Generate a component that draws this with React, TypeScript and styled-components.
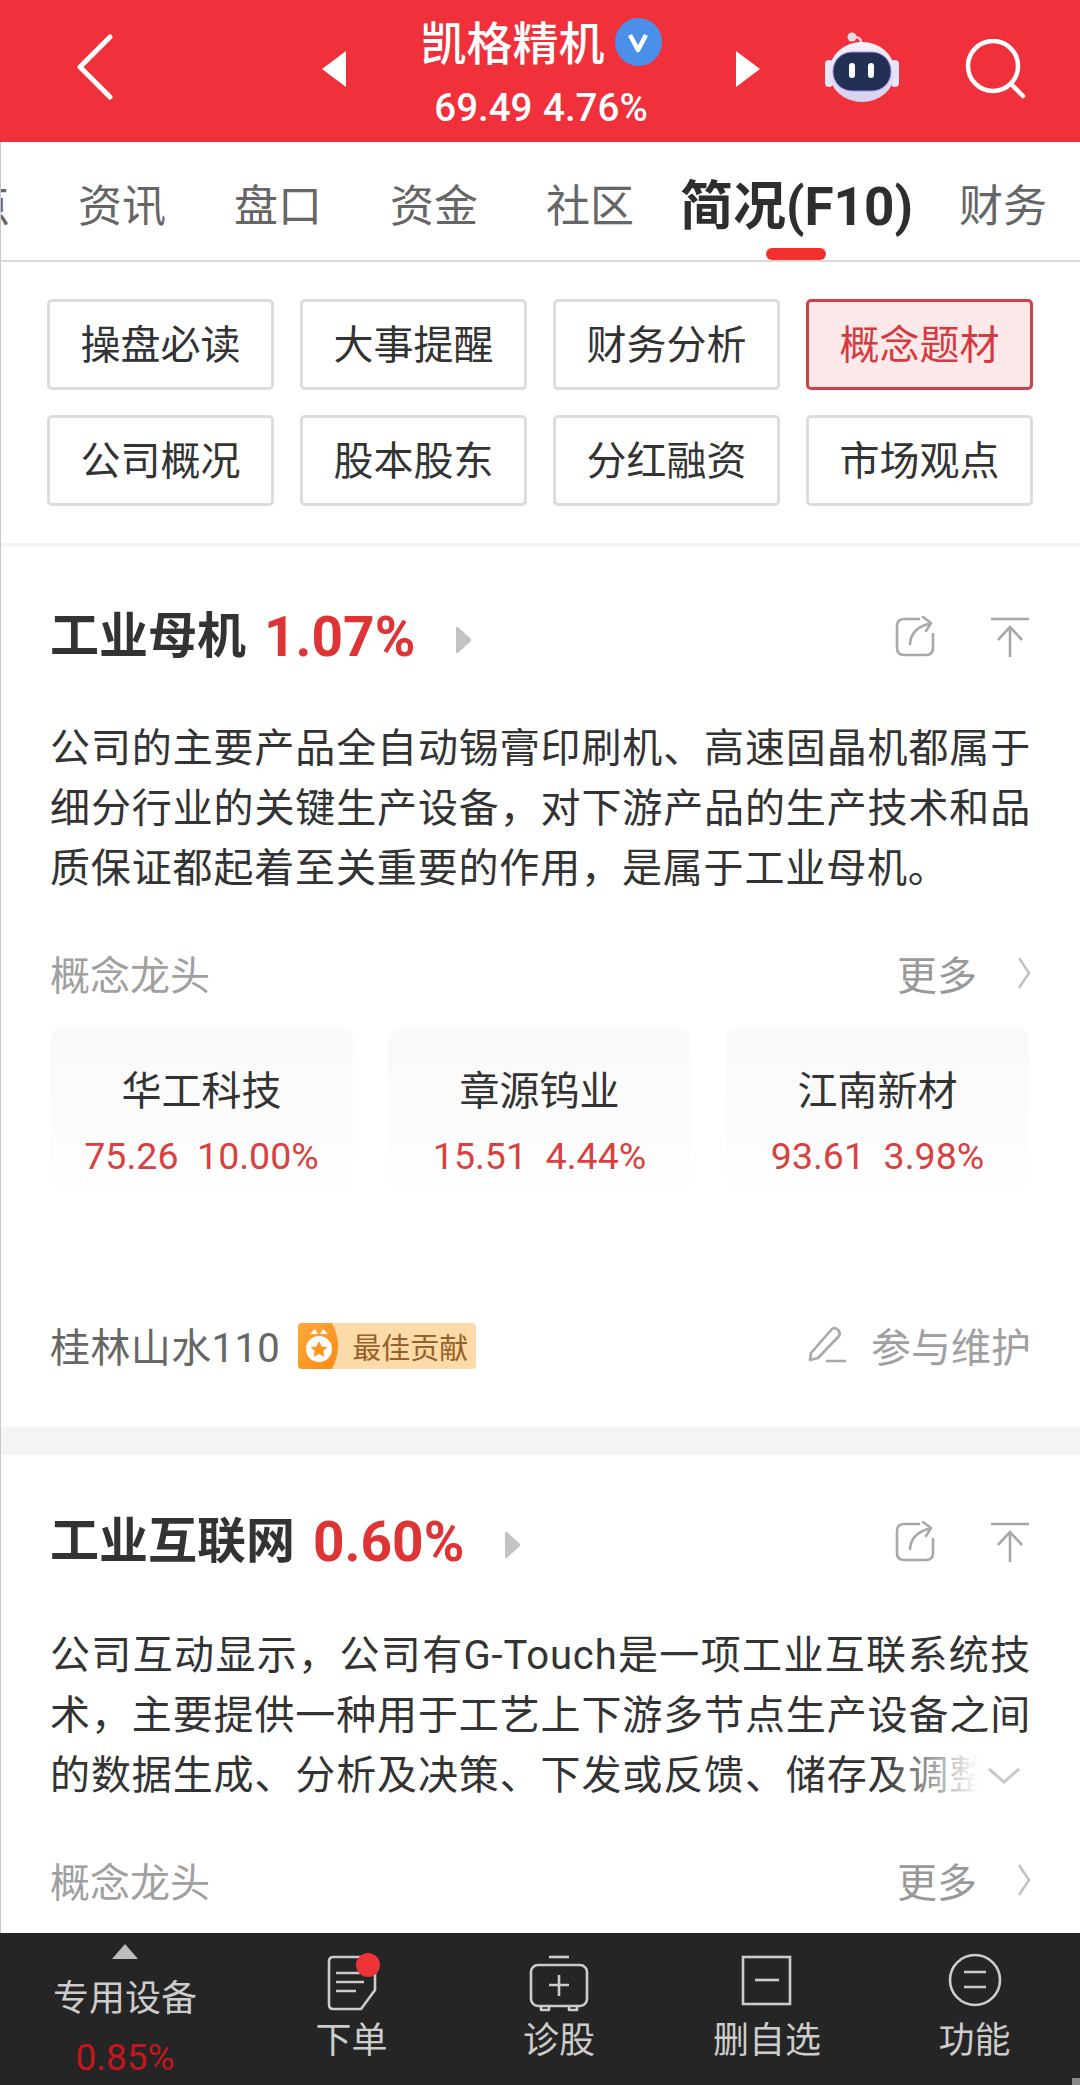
import React from "react";
import styled, { createGlobalStyle } from "styled-components";

const Global = createGlobalStyle`
  html, body { margin: 0; padding: 0; background: #fff; }
  * { box-sizing: border-box; }
`;

const Page = styled.div`
  width: 1080px;
  height: 2085px;
  overflow: hidden;
  display: flex;
  flex-direction: column;
  background: #fff;
  position: relative;
  font-family: Roboto, "Noto Sans CJK SC", sans-serif;
`;

const Header = styled.header`
  height: 142px;
  flex: none;
  background: #f0303a;
  display: flex;
  align-items: center;
  color: #fff;
`;
const BackIcon = styled.svg`
  width: 38px;
  height: 66px;
  margin-left: 76px;
  margin-top: -8px;
  flex: none;
`;
const Arrow = styled.svg<{ $first?: boolean }>`
  width: 24px;
  height: 36px;
  flex: none;
  margin-left: ${(p) => (p.$first ? "208px" : "0")};
  margin-top: -4px;
`;
const Center = styled.div`
  width: 390px;
  flex: none;
  align-self: flex-start;
  padding-top: 12px;
  display: flex;
  flex-direction: column;
  align-items: center;
`;
const TitleRow = styled.div`
  height: 64px;
  display: flex;
  align-items: center;
`;
const Title = styled.div`
  font-size: 46px;
  font-weight: 500;
  line-height: 64px;
`;
const Badge = styled.div`
  width: 47px;
  height: 48px;
  margin-left: 10px;
  margin-top: -4px;
  border-radius: 50%;
  background: #4a90e8;
  display: flex;
  align-items: center;
  justify-content: center;
`;
const Quote = styled.div`
  font-size: 38.5px;
  font-weight: 500;
  line-height: 44px;
  margin-top: 10px;
  word-spacing: 1px;
`;
const RobotIcon = styled.svg`
  width: 74px;
  height: 72px;
  margin-left: 65px;
  margin-top: -8px;
  flex: none;
`;
const SearchIcon = styled.svg`
  width: 62px;
  height: 62px;
  margin-left: 66px;
  margin-top: -2px;
  flex: none;
`;

const Tabs = styled.nav`
  height: 120px;
  flex: none;
  display: flex;
  align-items: center;
  gap: 68px;
  padding-top: 11px;
  overflow: hidden;
  white-space: nowrap;
  border-bottom: 2px solid #d8d8d8;
  border-left: 1px solid #c8c8c8;
  position: relative;
`;
const Tab = styled.div<{ $active?: boolean; $lead?: boolean }>`
  flex: none;
  font-size: ${(p) => (p.$active ? "53px" : "44px")};
  font-weight: ${(p) => (p.$active ? 700 : 400)};
  color: ${(p) => (p.$active ? "#2e2e2e" : "#666")};
  line-height: 60px;
  margin: ${(p) => (p.$active ? "0 -22px" : p.$lead ? "0 0 0 -79px" : "0")};
`;
const Indicator = styled.div`
  position: absolute;
  left: 765px;
  bottom: 0;
  width: 60px;
  height: 12px;
  border-radius: 6px;
  background: #f2302f;
`;

const Body = styled.main`
  flex: 1;
  min-height: 0;
  overflow: hidden;
  border-left: 1px solid #c8c8c8;
`;
const Shortcuts = styled.div`
  height: 285px;
  padding: 37px 46px 0;
  display: grid;
  grid-template-columns: repeat(4, 227px);
  grid-auto-rows: 91px;
  column-gap: 26px;
  row-gap: 25px;
  border-bottom: 4px solid #f4f4f4;
`;
const Shortcut = styled.div<{ $active?: boolean }>`
  border: 3px solid ${(p) => (p.$active ? "#cf4146" : "#dcdcdc")};
  border-radius: 5px;
  background: ${(p) => (p.$active ? "#fde9e9" : "#fff")};
  color: ${(p) => (p.$active ? "#d63a3f" : "#333")};
  font-size: 40px;
  padding-bottom: 5px;
  display: flex;
  align-items: center;
  justify-content: center;
`;

const Section = styled.section<{ $gap?: boolean }>`
  padding: ${(p) => (p.$gap ? "57px" : "60px")} 49px 52px;
  border-bottom: ${(p) => (p.$gap ? "0" : "28px solid #f4f4f4")};
`;
const Heading = styled.div`
  height: 60px;
  display: flex;
  align-items: center;
`;
const HeadName = styled.div`
  font-size: 49px;
  font-weight: 700;
  color: #333;
  line-height: 60px;
`;
const HeadPct = styled.div`
  font-size: 55px;
  font-weight: 700;
  color: #df3436;
  margin-left: 18px;
  line-height: 60px;
`;
const HeadCaret = styled.svg`
  width: 18px;
  height: 28px;
  margin-left: 39px;
  margin-top: 6px;
  flex: none;
`;
const HeadActions = styled.div`
  margin-left: auto;
  display: flex;
  align-items: center;
  gap: 52px;
`;
const ActionIcon = styled.svg`
  width: 42px;
  height: 42px;
  flex: none;
`;
const Para = styled.div`
  position: relative;
  margin-top: 52px;
  font-size: 40px;
  line-height: 60px;
  color: #333;
  letter-spacing: 0.85px;
  text-align: justify;
`;
const ClampPara = styled(Para)`
  margin-top: 54px;
  height: 180px;
  overflow: hidden;
`;
const Fade = styled.div`
  position: absolute;
  right: 0;
  bottom: 0;
  width: 150px;
  height: 60px;
  background: linear-gradient(90deg, rgba(255,255,255,0) 0%, #fff 65%);
  display: flex;
  align-items: center;
  justify-content: flex-end;
  padding-right: 10px;
`;
const ConceptRow = styled.div`
  height: 60px;
  margin-top: 44px;
  display: flex;
  align-items: center;
  font-size: 40px;
  color: #a0a0a0;
`;
const More = styled.div`
  margin-left: auto;
  display: flex;
  align-items: center;
  color: #999;
  gap: 40px;
`;
const MoreIcon = styled.svg`
  width: 14px;
  height: 34px;
  flex: none;
`;
const Cards = styled.div`
  display: grid;
  grid-template-columns: repeat(3, 303px);
  column-gap: 35px;
  margin-top: 25px;
`;
const Card = styled.div`
  height: 174px;
  border-radius: 12px 12px 0 0;
  background: linear-gradient(180deg, #f9f9f9 0%, #fcfcfc 60%, #ffffff 100%);
  display: flex;
  flex-direction: column;
  align-items: center;
  padding-top: 34px;
`;
const CardName = styled.div`
  font-size: 40px;
  line-height: 60px;
  color: #333;
`;
const CardQuote = styled.div`
  font-size: 37.5px;
  line-height: 44px;
  color: #d8413f;
  margin-top: 12px;
  white-space: pre;
`;
const Footer = styled.div`
  height: 60px;
  margin-top: 113px;
  display: flex;
  align-items: center;
`;
const Author = styled.div`
  font-size: 40px;
  color: #666;
  letter-spacing: 0.4px;
`;
const Medal = styled.div`
  height: 46px;
  width: 178px;
  margin-left: 18px;
  margin-top: 2px;
  border-radius: 4px;
  overflow: hidden;
  background: #fddba8;
  display: flex;
  align-items: center;
  color: #96612a;
  font-size: 29px;
`;
const MedalIcon = styled.svg`
  width: 46px;
  height: 46px;
  flex: none;
  margin-right: 8px;
`;
const Maintain = styled.div`
  margin-left: auto;
  display: flex;
  align-items: center;
  gap: 24px;
  font-size: 40px;
  color: #a0a0a0;
`;
const PenIcon = styled.svg`
  width: 40px;
  height: 40px;
  flex: none;
`;

const BottomBar = styled.footer`
  height: 152px;
  flex: none;
  background: #252525;
  display: grid;
  grid-template-columns: 250px 207px 208px 208px 207px;
  color: #ccc;
  position: relative;
`;
const Sector = styled.div`
  display: flex;
  flex-direction: column;
  align-items: center;
  padding-top: 11px;
`;
const SectorCaret = styled.svg`
  width: 26px;
  height: 15px;
  flex: none;
`;
const SectorName = styled.div`
  font-size: 36px;
  line-height: 44px;
  margin-top: 18px;
`;
const SectorPct = styled.div`
  font-size: 37px;
  line-height: 40px;
  color: #c4161c;
  margin-top: 17px;
`;
const BarItem = styled.div`
  display: flex;
  flex-direction: column;
  align-items: center;
  padding-top: 22px;
  font-size: 36px;
  margin-left: -4px;
`;
const BarIcon = styled.svg`
  width: 60px;
  height: 56px;
  flex: none;
  overflow: visible;
`;
const BarLabel = styled.div`
  line-height: 44px;
  margin-top: 8px;
`;
const CornerMark = styled.div`
  position: absolute;
  right: 0;
  bottom: 0;
  width: 8px;
  height: 7px;
  background: #8a8a8a;
`;

const Shortcuts_ = ["操盘必读", "大事提醒", "财务分析", "概念题材", "公司概况", "股本股东", "分红融资", "市场观点"];
const TabNames = ["资讯", "盘口", "资金", "社区"];

const Heads = ({ name, pct }: { name: string; pct: string }) => (
  <Heading>
    <HeadName>{name}</HeadName>
    <HeadPct>{pct}</HeadPct>
    <HeadCaret viewBox="0 0 18 28"><path d="M2 2 Q2 0 4 1 L16 12 Q18 14 16 16 L4 27 Q2 28 2 26 Z" fill="#c4c4c4" /></HeadCaret>
    <HeadActions>
      <ActionIcon viewBox="0 0 42 42" fill="none" stroke="#a8a8a8" strokeWidth="2.6" strokeLinecap="round" strokeLinejoin="round">
        <path d="M24 3 H9 Q2 3 2 10 V32 Q2 39 9 39 H31 Q38 39 38 32 V18" />
        <path d="M15 28 Q16 13 33 8" />
        <path d="M28 1 L36 7 L31 15" />
      </ActionIcon>
      <ActionIcon viewBox="0 0 42 42" fill="none" stroke="#a8a8a8" strokeWidth="2.6">
        <path d="M2 3 H40" />
        <path d="M21 41 V11 M9 24 L21 11 L33 24" />
      </ActionIcon>
    </HeadActions>
  </Heading>
);

const Concept = () => (
  <ConceptRow>
    概念龙头
    <More>
      更多
      <MoreIcon viewBox="0 0 14 34" fill="none" stroke="#c0c0c0" strokeWidth="2.4"><path d="M2 2 L12 17 L2 32" /></MoreIcon>
    </More>
  </ConceptRow>
);

export default function App() {
  return (
    <Page>
      <Global />
      <Header>
        <BackIcon viewBox="0 0 38 66" fill="none" stroke="#fff" strokeWidth="5" strokeLinecap="round" strokeLinejoin="round">
          <path d="M34 3 L4 33 L34 63" />
        </BackIcon>
        <Arrow $first viewBox="0 0 24 36"><path d="M24 0 V36 L0 18 Z" fill="#fff" /></Arrow>
        <Center>
          <TitleRow>
            <Title>凯格精机</Title>
            <Badge>
              <svg width="24" height="24" viewBox="0 0 24 24" fill="none" stroke="#fff" strokeWidth="4.5" strokeLinejoin="round"><path d="M4 5 L12 20 L20 5" /></svg>
            </Badge>
          </TitleRow>
          <Quote>69.49 4.76%</Quote>
        </Center>
        <Arrow viewBox="0 0 24 36"><path d="M0 0 V36 L24 18 Z" fill="#fff" /></Arrow>
        <RobotIcon viewBox="0 0 74 72">
          <defs>
            <linearGradient id="helm" x1="0" y1="0" x2="0" y2="1">
              <stop offset="0" stopColor="#f4f2fb" />
              <stop offset="1" stopColor="#d5d2f0" />
            </linearGradient>
          </defs>
          <circle cx="27" cy="6" r="4.5" fill="#f3d9e6" />
          <path d="M30 6 Q37 6 36 14" fill="none" stroke="#f3d9e6" strokeWidth="2.5" />
          <rect x="0" y="29" width="8" height="27" rx="4" fill="#e8e6f7" />
          <rect x="66" y="29" width="8" height="27" rx="4" fill="#e8e6f7" />
          <ellipse cx="37" cy="41" rx="33" ry="30" fill="url(#helm)" />
          <rect x="8" y="21" width="58" height="39" rx="19" fill="#223055" stroke="#a48ee0" strokeWidth="1" />
          <rect x="24" y="32" width="6" height="15" rx="3" fill="#fff" />
          <rect x="43" y="32" width="6" height="15" rx="3" fill="#fff" />
        </RobotIcon>
        <SearchIcon viewBox="0 0 62 62" fill="none" stroke="#fff" strokeWidth="4.5">
          <circle cx="28" cy="27" r="25" />
          <path d="M46 45 L58 57" strokeLinecap="round" />
        </SearchIcon>
      </Header>

      <Tabs>
        <Tab $lead>盘点</Tab>
        {TabNames.map((t) => <Tab key={t}>{t}</Tab>)}
        <Tab $active>简况(F10)</Tab>
        <Tab>财务</Tab>
        <Indicator />
      </Tabs>

      <Body>
        <Shortcuts>
          {Shortcuts_.map((s) => <Shortcut key={s} $active={s === "概念题材"}>{s}</Shortcut>)}
        </Shortcuts>

        <Section>
          <Heads name="工业母机" pct="1.07%" />
          <Para>公司的主要产品全自动锡膏印刷机、高速固晶机都属于细分行业的关键生产设备，对下游产品的生产技术和品质保证都起着至关重要的作用，是属于工业母机。</Para>
          <Concept />
          <Cards>
            <Card><CardName>华工科技</CardName><CardQuote>75.26  10.00%</CardQuote></Card>
            <Card><CardName>章源钨业</CardName><CardQuote>15.51  4.44%</CardQuote></Card>
            <Card><CardName>江南新材</CardName><CardQuote>93.61  3.98%</CardQuote></Card>
          </Cards>
          <Footer>
            <Author>桂林山水110</Author>
            <Medal>
              <MedalIcon viewBox="0 0 46 46">
                <defs>
                  <linearGradient id="med" x1="0" y1="0" x2="1" y2="1">
                    <stop offset="0" stopColor="#ffa93a" />
                    <stop offset="1" stopColor="#fb8a14" />
                  </linearGradient>
                </defs>
                <path d="M0 0 H34 Q46 23 34 46 H0 Z" fill="url(#med)" />
                <circle cx="21" cy="26" r="13" fill="#fff" />
                <path d="M12 11 L17 6 L20 11 Z M30 11 L25 6 L22 11 Z" fill="#fff" />
                <path d="M21 18 L23.6 23.4 L29.4 24.1 L25.2 28.1 L26.3 33.8 L21 31 L15.7 33.8 L16.8 28.1 L12.6 24.1 L18.4 23.4 Z" fill="#fb9420" />
              </MedalIcon>
              最佳贡献
            </Medal>
            <Maintain>
              <PenIcon viewBox="0 0 40 40" fill="none" stroke="#a8a8a8" strokeWidth="2.6" strokeLinejoin="round" strokeLinecap="round">
                <path d="M4 28 L25 4 Q28 2 31 5 Q34 8 32 11 L11 33 L3 35 Z" />
                <path d="M20 36 H38" />
              </PenIcon>
              参与维护
            </Maintain>
          </Footer>
        </Section>

        <Section $gap>
          <Heads name="工业互联网" pct="0.60%" />
          <ClampPara>
            公司互动显示，公司有G-Touch是一项工业互联系统技术，主要提供一种用于工艺上下游多节点生产设备之间的数据生成、分析及决策、下发或反馈、储存及调整等功能的系统技术方案，帮助客户实现生产的智能化。
            <Fade>
              <svg width="34" height="18" viewBox="0 0 34 18" fill="none" stroke="#c8c8c8" strokeWidth="3"><path d="M2 2 L17 15 L32 2" /></svg>
            </Fade>
          </ClampPara>
          <Concept />
        </Section>
      </Body>

      <BottomBar>
        <Sector>
          <SectorCaret viewBox="0 0 26 15"><path d="M13 0 L26 15 H0 Z" fill="#bdbdbd" /></SectorCaret>
          <SectorName>专用设备</SectorName>
          <SectorPct>0.85%</SectorPct>
        </Sector>
        <BarItem>
          <BarIcon viewBox="0 0 60 56" fill="none" stroke="#ccc" strokeWidth="2.6" strokeLinejoin="round">
            <path d="M44 2 H11 Q7 2 7 7 V49 Q7 54 11 54 H39 L53 35 V12" />
            <path d="M14 18 H38 M14 27 H42 M14 36 H34" />
            <circle cx="46" cy="10" r="12" fill="#ee3338" stroke="none" />
          </BarIcon>
          <BarLabel>下单</BarLabel>
        </BarItem>
        <BarItem>
          <BarIcon viewBox="0 0 60 56" fill="none" stroke="#ccc" strokeWidth="2.6" strokeLinejoin="round">
            <path d="M20 2 H40" />
            <rect x="2" y="10" width="56" height="41" rx="7" />
            <path d="M30 20 V41 M20 30 H40" />
            <path d="M12 51 V55 H20 V51 M40 51 V55 H48 V51" />
          </BarIcon>
          <BarLabel>诊股</BarLabel>
        </BarItem>
        <BarItem>
          <BarIcon viewBox="0 0 60 56" fill="none" stroke="#ccc" strokeWidth="2.6">
            <rect x="6" y="2" width="47" height="47" />
            <path d="M18 25 H42" />
          </BarIcon>
          <BarLabel>删自选</BarLabel>
        </BarItem>
        <BarItem>
          <BarIcon viewBox="0 0 60 56" fill="none" stroke="#ccc" strokeWidth="2.6">
            <circle cx="30" cy="25" r="25" />
            <path d="M19 17 H41 M19 32 H41" />
          </BarIcon>
          <BarLabel>功能</BarLabel>
        </BarItem>
        <CornerMark />
      </BottomBar>
    </Page>
  );
}
